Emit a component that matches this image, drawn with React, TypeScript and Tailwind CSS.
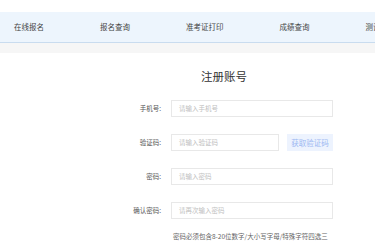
import React from 'react';

const navItems = ['在线报名', '报名查询', '准考证打印', '成绩查询', '测试中心'];

const Row = ({ label, children }: { label: string; children: React.ReactNode }) => (
  <div className="flex items-center h-[17px]">
    <div className="w-[46px] text-right text-[6.5px] text-[#555] leading-none shrink-0">{label}</div>
    <div className="ml-[10px] flex items-center gap-[8px]">{children}</div>
  </div>
);

const Field = ({ placeholder, width }: { placeholder: string; width: string }) => (
  <div className={`${width} h-[17px] border border-[#e8e8e8] bg-white flex items-center px-[7px] text-[6.5px] text-[#c0c0c0] leading-none`}>
    {placeholder}
  </div>
);

export default function App() {
  return (
    <div className="w-[375px] h-[250px] bg-white overflow-hidden" style={{ fontFamily: '"Noto Sans CJK SC", "Noto Sans", sans-serif' }}>
      <div className="h-[12px] bg-white" />
      <div className="h-[31px] bg-[#edf5fd] border-b border-[#c9dcef] flex items-center pl-[14px] gap-[56px] whitespace-nowrap">
        {navItems.map((n) => (
          <span key={n} className="text-[7.5px] text-[#444] leading-none">{n}</span>
        ))}
      </div>
      <div className="h-[10px] bg-[#f6f6f6]" />
      <div className="ml-[115px] w-[218px] pt-[15px]">
        <div className="text-center text-[11.5px] leading-[16px] text-[#333]">注册账号</div>
        <div className="mt-[16px] flex flex-col gap-[17px]">
          <Row label="手机号:">
            <Field placeholder="请输入手机号" width="w-[162px]" />
          </Row>
          <Row label="验证码:">
            <Field placeholder="请输入验证码" width="w-[108px]" />
            <div className="w-[46px] h-[17px] bg-[#edf3fe] flex items-center justify-center text-[7.5px] text-[#9cb8f2] leading-none">获取验证码</div>
          </Row>
          <Row label="密码:">
            <Field placeholder="请输入密码" width="w-[162px]" />
          </Row>
          <Row label="确认密码:">
            <Field placeholder="请再次输入密码" width="w-[162px]" />
          </Row>
        </div>
        <div className="mt-[12px] ml-[58px] text-[6.5px] leading-[10px] text-[#666] whitespace-nowrap">密码必须包含8-20位数字/大小写字母/特殊字符四选三</div>
      </div>
    </div>
  );
}
